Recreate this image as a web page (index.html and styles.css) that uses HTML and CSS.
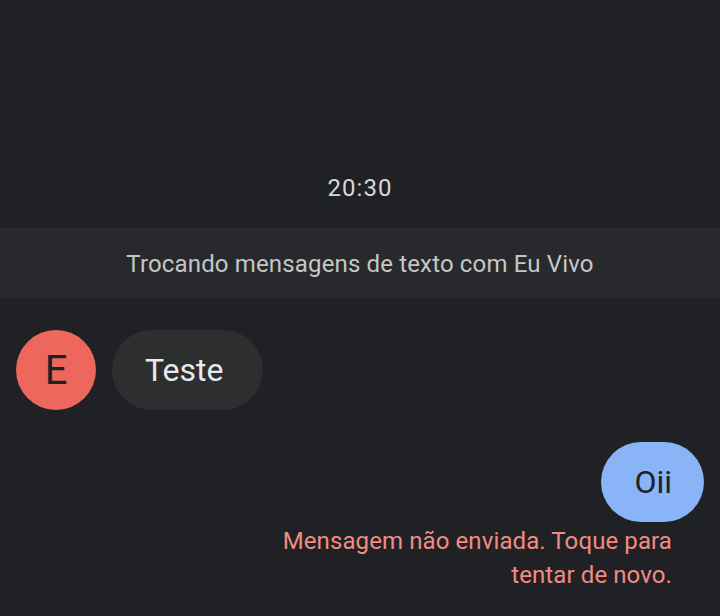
FILE: index.html
```html
<!DOCTYPE html>
<html lang="pt">
<head>
<meta charset="utf-8">
<link rel="stylesheet" href="styles.css">
</head>
<body>
<main class="chat">
  <div class="time">20:30</div>
  <div class="banner">Trocando mensagens de texto com Eu Vivo</div>
  <div class="row incoming">
    <div class="avatar">E</div>
    <div class="bubble in">Teste</div>
  </div>
  <div class="row outgoing">
    <div class="bubble out">Oii</div>
  </div>
  <div class="error">Mensagem não enviada. Toque para<br>tentar de novo.</div>
</main>
</body>
</html>
```
FILE: styles.css
```css
html, body {
  margin: 0;
  padding: 0;
  background: #202124;
  width: 720px;
  height: 616px;
  overflow: hidden;
  font-family: Roboto, "Noto Sans", sans-serif;
}
.chat {
  display: flex;
  flex-direction: column;
  padding-top: 172px;
}
.time {
  text-align: center;
  color: #d5d7da;
  font-size: 24px;
  letter-spacing: 1px;
  line-height: 32px;
  height: 32px;
}
.banner {
  margin-top: 24px;
  height: 70px;
  background: #28292c;
  color: #c4c7c5;
  font-size: 24px;
  letter-spacing: 0.15px;
  display: flex;
  align-items: center;
  justify-content: center;
  padding-top: 2px;
  box-sizing: border-box;
}
.row {
  display: flex;
  align-items: center;
}
.incoming {
  margin-top: 32px;
  padding-left: 16px;
  gap: 16px;
}
.avatar {
  width: 80px;
  height: 80px;
  border-radius: 50%;
  background: #ee675c;
  color: #202124;
  font-size: 40px;
  display: flex;
  align-items: center;
  justify-content: center;
}
.bubble {
  height: 80px;
  border-radius: 40px;
  display: flex;
  align-items: center;
  font-size: 32px;
  box-sizing: border-box;
}
.bubble.in {
  background: #2d2e30;
  color: #e8eaed;
  padding: 0 40px 0 33px;
}
.outgoing {
  margin-top: 32px;
  justify-content: flex-end;
  padding-right: 16px;
}
.bubble.out {
  background: #8ab4f8;
  color: #202124;
  padding: 0 32px 0 33px;
}
.error {
  margin-top: 2px;
  padding-right: 48px;
  text-align: right;
  color: #f28b82;
  font-size: 24px;
  letter-spacing: 0.1px;
  line-height: 34px;
}
```
